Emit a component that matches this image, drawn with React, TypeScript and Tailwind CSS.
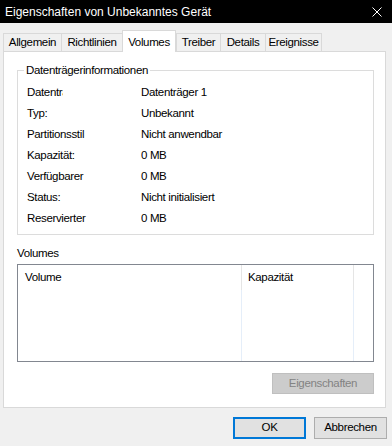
import React from "react";

const rows: [string, string][] = [
  ["Datenträger:", "Datenträger 1"],
  ["Typ:", "Unbekannt"],
  ["Partitionsstil", "Nicht anwendbar"],
  ["Kapazität:", "0 MB"],
  ["Verfügbarer", "0 MB"],
  ["Status:", "Nicht initialisiert"],
  ["Reservierter", "0 MB"],
];

const tabs = [
  { label: "Allgemein", w: "w-[58px]" },
  { label: "Richtlinien", w: "w-[61px]" },
  { label: "Volumes", w: "w-[54px]", active: true },
  { label: "Treiber", w: "w-[44px]" },
  { label: "Details", w: "w-[45px]" },
  { label: "Ereignisse", w: "w-[57px]" },
];

export default function App() {
  return (
    <div className="w-[392px] h-[446px] bg-[#f0f0f0] flex flex-col text-[11.5px] tracking-[-0.35px] text-black font-['Liberation_Sans',Arial,sans-serif] overflow-hidden">
      {/* Title bar */}
      <div className="h-[23px] bg-black flex items-center pl-[5px] pr-[9px] text-white text-[12px] tracking-normal">
        <span className="flex-1 leading-none">Eigenschaften von Unbekanntes Gerät</span>
        <svg width="10" height="10" viewBox="0 0 10 10" className="mr-[1px]">
          <path d="M0.5 0.5 L9.5 9.5 M9.5 0.5 L0.5 9.5" stroke="white" strokeWidth="1" />
        </svg>
      </div>

      {/* Tabs */}
      <div className="h-[28px] flex items-end pl-[3px] relative z-10">
        {tabs.map((t) =>
          t.active ? (
            <div key={t.label}
              className={`${t.w} h-[22px] -mb-px bg-white border border-b-0 border-[#d9d9d9] flex items-start justify-center pt-[3px]`}>
              {t.label}
            </div>
          ) : (
            <div key={t.label}
              className={`${t.w} h-[18px] bg-[#f0f0f0] border border-b-0 border-r-0 border-[#d9d9d9] flex items-center justify-center last:border-r`}>
              {t.label}
            </div>
          )
        )}
      </div>

      {/* Panel */}
      <div className="ml-[3px] w-[383px] h-[357px] bg-white border border-[#d9d9d9] flex flex-col pl-[13px] pt-[11px]">
        <fieldset className="w-[357px] h-[172px] border border-[#dcdcdc] pl-[9px]">
          <legend className="-ml-[3px] px-[2px] leading-[15px]">Datenträgerinformationen</legend>
          <div className="flex flex-col mt-[4px]">
            {rows.map(([k, v], i) => (
              <div key={k} className="flex h-[21px] items-center">
                <span className="w-[114px] whitespace-nowrap">
                  {i === 0 ? (
                    <span className="inline-block w-[36px] overflow-hidden align-bottom">{k}</span>
                  ) : k}
                </span>
                <span>{v}</span>
              </div>
            ))}
          </div>
        </fieldset>

        <div className="mt-[11px] leading-[15px]">Volumes</div>

        <div className="mt-[3px] w-[357px] h-[98px] border border-[#828790] flex">
          <div className="w-[224px] flex flex-col border-r border-[#e5eef9]">
            <div className="h-[25px] flex items-center pl-[7px] border-r border-[#e5e5e5] -mr-px">Volume</div>
          </div>
          <div className="w-[112px] flex flex-col border-r border-[#e5eef9]">
            <div className="h-[25px] flex items-center pl-[6px] border-r border-[#e5e5e5] -mr-px">Kapazität</div>
          </div>
        </div>

        <div className="flex justify-end w-[357px] mt-[11px]">
          <button className="w-[102px] h-[21px] bg-[#cccccc] border border-[#bfbfbf] text-[#838383] flex items-center justify-center">
            Eigenschaften
          </button>
        </div>
      </div>

      {/* Footer buttons */}
      <div className="flex justify-end gap-[8px] pr-[5px] mt-[9px]">
        <button className="w-[73px] h-[22px] bg-[#e1e1e1] border-2 border-[#0078d7] flex items-center justify-center">OK</button>
        <button className="w-[73px] h-[22px] bg-[#e1e1e1] border border-[#adadad] flex items-center justify-center">Abbrechen</button>
      </div>
    </div>
  );
}
